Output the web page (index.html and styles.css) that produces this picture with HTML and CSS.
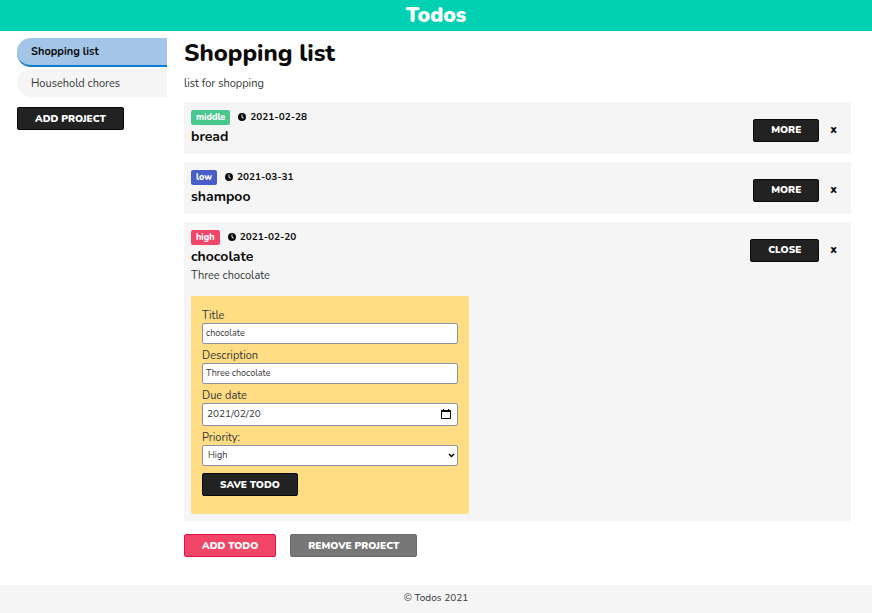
FILE: index.html
```html
<!DOCTYPE html>
<html lang="en">
<head>
<meta charset="utf-8">
<meta name="viewport" content="width=device-width, initial-scale=1">
<title>Todos</title>
<link rel="stylesheet" href="styles.css">
</head>
<body>
<svg class="sprite" aria-hidden="true">
  <symbol id="clock" viewBox="0 0 16 16">
    <path fill="currentColor" fill-rule="evenodd" d="M8 0a8 8 0 1 1 0 16A8 8 0 0 1 8 0ZM7 3v5.600l3.700 2.700 1.100-1.500L8.900 7.700V3Z"/>
  </symbol>
</svg>
<header class="header"><span class="brand">Todos</span></header>
<div class="layout">
  <aside class="sidebar">
    <nav class="projects">
      <a class="project active" href="#shopping">Shopping list</a>
      <a class="project" href="#chores">Household chores</a>
    </nav>
    <button class="btn" type="button">Add project</button>
  </aside>
  <main class="content">
    <h1>Shopping list</h1>
    <p class="summary">list for shopping</p>
    <section class="todos">
      <article class="todo">
        <div class="todo-head">
          <div class="info">
            <div class="meta"><span class="tag middle">middle</span><svg class="clock"><use href="#clock"/></svg><time>2021-02-28</time></div>
            <h2>bread</h2>
          </div>
          <div class="actions"><button class="btn" type="button">More</button><button class="remove" type="button" aria-label="Delete">x</button></div>
        </div>
      </article>
      <article class="todo">
        <div class="todo-head">
          <div class="info">
            <div class="meta"><span class="tag low">low</span><svg class="clock"><use href="#clock"/></svg><time>2021-03-31</time></div>
            <h2>shampoo</h2>
          </div>
          <div class="actions"><button class="btn" type="button">More</button><button class="remove" type="button" aria-label="Delete">x</button></div>
        </div>
      </article>
      <article class="todo">
        <div class="todo-head">
          <div class="info">
            <div class="meta"><span class="tag high">high</span><svg class="clock"><use href="#clock"/></svg><time>2021-02-20</time></div>
            <h2>chocolate</h2>
          </div>
          <div class="actions"><button class="btn" type="button">Close</button><button class="remove" type="button" aria-label="Delete">x</button></div>
        </div>
        <p class="details">Three chocolate</p>
        <form class="edit">
          <label for="title">Title</label>
          <input class="field" id="title" type="text" value="chocolate">
          <label for="description">Description</label>
          <input class="field" id="description" type="text" value="Three chocolate">
          <label for="due">Due date</label>
          <div class="picker">
            <input class="field date" id="due" type="text" value="2021/02/20">
            <button class="calendar" type="button" aria-label="Open calendar">
              <svg viewBox="0 0 10 11"><path fill="currentColor" fill-rule="evenodd" d="M1 1h1V0h1v1h4V0h1v1h1q1 0 1 1v7q0 1-1 1H1q-1 0-1-1V2q0-1 1-1ZM1 3v6h8V3Z"/></svg>
            </button>
          </div>
          <label for="priority">Priority:</label>
          <div class="picker">
            <select class="field" id="priority"><option>Low</option><option>Middle</option><option selected>High</option></select>
            <svg class="chevron" viewBox="0 0 7 5" aria-hidden="true"><path d="M1 1l2.500 2.500L6 1" fill="none" stroke="currentColor" stroke-width="1.500"/></svg>
          </div>
          <button class="btn save" type="button">Save todo</button>
        </form>
      </article>
    </section>
    <div class="toolbar">
      <button class="btn danger" type="button">Add todo</button>
      <button class="btn muted" type="button">Remove project</button>
    </div>
  </main>
</div>
<footer class="footer">© Todos 2021</footer>
</body>
</html>
```
FILE: styles.css
```css
* { box-sizing: border-box; }

body {
  margin: 0;
  min-height: 100vh;
  display: flex;
  flex-direction: column;
  font: 11px/16px Nunito, "Open Sans", sans-serif;
  color: #363636;
  background: #fff;
}

h1, h2, p { margin: 0; }
button, input, select { font: inherit; }
.sprite { display: none; }

.header {
  height: 31px;
  background: #00d1b2;
  text-align: center;
}
.brand {
  color: #fff;
  font-size: 21px;
  font-weight: 900;
  line-height: 31px;
}

.layout {
  flex: 1;
  display: grid;
  grid-template-columns: 150px minmax(0, 1fr);
  gap: 17px;
  padding: 7px 21px 28px 17px;
}

.projects {
  display: flex;
  flex-direction: column;
  gap: 2px;
  margin-bottom: 10px;
}
.project {
  height: 28px;
  padding: 7px 14px 5px;
  border-radius: 14px 0 0 14px;
  background: #f5f5f5;
  color: #363636;
  text-decoration: none;
}
.project.active {
  height: 29px;
  padding-top: 6px;
  border-bottom: 2px solid #0a7bd0;
  background: #a2c5e8;
  color: #0a0a0a;
  font-weight: 700;
}

.btn {
  height: 23px;
  padding: 0 17px;
  border: 1px solid #0a0a0a;
  border-radius: 2px;
  background: #222;
  color: #fff;
  font-size: 10px;
  font-weight: 900;
  line-height: 20px;
  text-transform: uppercase;
}
.btn.danger { background: #f14668; border-color: #e8104a; }
.btn.muted { background: #777; border-color: #6a6a6a; }

h1 {
  margin-bottom: 8px;
  color: #0a0a0a;
  font-size: 24px;
  font-weight: 800;
  line-height: 30px;
}
.summary { margin-bottom: 10px; }

.todos {
  display: flex;
  flex-direction: column;
  gap: 8px;
}
.todo {
  padding: 7px;
  background: #f5f5f5;
}
.todo-head {
  display: flex;
  justify-content: space-between;
}
.meta {
  display: flex;
  align-items: center;
  color: #0a0a0a;
  font-size: 10px;
  font-weight: 700;
}
.tag {
  height: 15px;
  margin-right: 8px;
  padding: 0 5px;
  border-radius: 2px;
  color: #fff;
  font-size: 9px;
  font-weight: 800;
  line-height: 14px;
}
.middle { background: #48c78e; }
.low { background: #485fc7; }
.high { background: #f14668; }
.clock {
  width: 8px;
  height: 8px;
  margin-right: 4px;
}
h2 {
  margin-top: 2px;
  color: #0a0a0a;
  font-size: 14px;
  font-weight: 700;
  line-height: 20px;
}
.details { margin-top: 1px; }
.actions {
  display: flex;
  align-items: center;
  gap: 11px;
  padding: 4px 7px 0 0;
}
.remove {
  padding: 0 0 3px;
  border: 0;
  background: none;
  color: #000;
  font-size: 12px;
  font-weight: 800;
}

.edit {
  display: flex;
  flex-direction: column;
  width: 278px;
  max-width: 100%;
  margin-top: 12px;
  padding: 12px 11px 18px;
  border-radius: 2px;
  background: #ffdd85;
}
.edit label { line-height: 15px; }
.field {
  width: 100%;
  height: 21px;
  margin-bottom: 4px;
  padding: 0 3px 1px;
  border: 1px solid #8f8f9d;
  border-radius: 2px;
  background: #fff;
  color: #363636;
  font-size: 9px;
}
select.field {
  appearance: none;
  margin-bottom: 7px;
  padding: 0 5px 1px;
}
.picker { position: relative; display: flex; }
.field.date { height: 23px; padding-left: 4px; font-size: 10px; }
.calendar {
  position: absolute;
  top: 6px;
  right: 7px;
  width: 10px;
  height: 11px;
  padding: 0;
  border: 0;
  background: none;
  color: #000;
}
.calendar svg { display: block; width: 10px; height: 11px; }
.chevron {
  position: absolute;
  top: 8px;
  right: 3px;
  width: 7px;
  height: 5px;
  color: #000;
  pointer-events: none;
}
.save { align-self: flex-start; }

.toolbar {
  display: flex;
  gap: 14px;
  margin-top: 13px;
}

.footer {
  height: 28px;
  background: #f5f5f5;
  font-size: 10px;
  line-height: 27px;
  text-align: center;
}
```
